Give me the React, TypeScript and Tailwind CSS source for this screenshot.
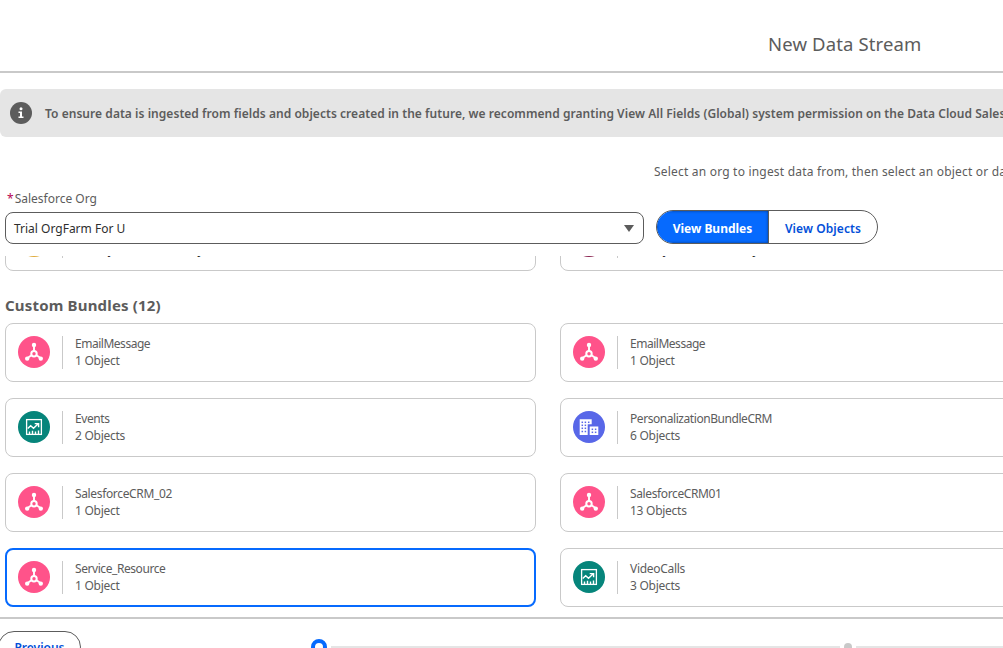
import React from "react";

type Kind = "network" | "metrics" | "account" | "gold" | "plum";

const colors: Record<Kind, string> = {
  network: "bg-[#ff538a]",
  metrics: "bg-[#06857b]",
  account: "bg-[#5867e8]",
  gold: "bg-[#dfab3c]",
  plum: "bg-[#8a2350]",
};

function Dots({ xs, ys }: { xs: number[]; ys: number[] }) {
  return (
    <g fill="#5867e8">
      {ys.map((y) => xs.map((x) => <rect key={`${x}-${y}`} x={x - 0.75} y={y - 0.75} width="1.5" height="1.5" />))}
    </g>
  );
}

function Glyph({ kind }: { kind: Kind }) {
  if (kind === "network")
    return (
      <svg viewBox="0 0 32 32" className="size-8" fill="none" stroke="#fff">
        <path d="M16 9v6M13.500 19.300 9.500 22M18.500 19.300 22.500 22" strokeWidth="1.900" />
        <circle cx="16" cy="17.700" r="2.700" strokeWidth="2" />
        <g fill="#fff" stroke="none">
          <circle cx="16" cy="8.900" r="2.200" />
          <circle cx="9.200" cy="22.600" r="2.200" />
          <circle cx="22.800" cy="22.600" r="2.200" />
        </g>
      </svg>
    );
  if (kind === "metrics")
    return (
      <svg viewBox="0 0 32 32" className="size-8" fill="none" stroke="#fff">
        <rect x="8.600" y="8.600" width="14.800" height="14.800" strokeWidth="1.300" />
        <path d="M9.700 17.600l3-2.900 2.800 2.500 4.700-4.500M16.700 12.600h3.900v3.700" strokeWidth="1.400" />
        <path d="M11.500 20.500v3M14.500 19.800v3.500M17.500 20.500v3M20.500 19.500v4" strokeWidth="1.400" />
      </svg>
    );
  if (kind === "account")
    return (
      <svg viewBox="0 0 32 32" className="size-8" fill="#fff">
        <path d="M6.700 8.300h12v5h-4V24h-8zM16.700 15.500h8.600V24h-8.600z" />
        <Dots xs={[9.3, 12.4]} ys={[11.3, 14.3, 17.3, 20.5]} />
        <Dots xs={[15.7]} ys={[11.3]} />
        <Dots xs={[19.4, 22.6]} ys={[18.3, 21.3]} />
      </svg>
    );
  return null;
}

interface CardProps {
  kind: Kind;
  name?: string;
  count: string;
  active?: boolean;
  tracking?: string;
  countClass?: string;
}

function Card({ kind, name, count, active, tracking = "", countClass = "tracking-[-0.270px]" }: CardProps) {
  return (
    <div
      className={`flex h-[59px] w-[531px] shrink-0 items-start rounded-lg ${
        active ? "border-2 border-[#066afe] pt-[11px] pl-[11px]" : "border border-[#c9c9c9] pt-3 pl-3"
      }`}
    >
      <div className={`size-8 shrink-0 rounded-full ${colors[kind]}`}>
        <Glyph kind={kind} />
      </div>
      <div className="ml-3 h-[33px] border-l border-[#c9c9c9]" />
      <div className="-mt-px ml-3 text-[12px] leading-[17px] whitespace-nowrap">
        <div className={`h-[17px] ${tracking}`}>{name}</div>
        <div className={countClass}>{count}</div>
      </div>
    </div>
  );
}

export default function App() {
  return (
    <div className="flex h-[648px] w-[1003px] flex-col overflow-hidden bg-white font-['Noto_Sans',sans-serif] text-[#5c5c5c]">
      <header className="flex h-[73px] shrink-0 items-center border-b-2 border-[#c9c9c9] pt-[17px] pl-[768px]">
        <h1 className="text-[18.500px] tracking-[0.140px] whitespace-nowrap">New Data Stream</h1>
      </header>
      <div className="mt-4 flex h-12 w-[1040px] shrink-0 items-center rounded-[6px] bg-[#e5e5e5] pl-2.5">
        <svg viewBox="0 0 22 22" className="size-[22px] shrink-0">
          <circle cx="11" cy="11" r="11" fill="#5c5c5c" />
          <circle cx="11" cy="6.800" r="1.500" fill="#fff" />
          <path d="M8.500 9.500H12v5h1.500V16h-5v-1.500H10V11H8.500z" fill="#fff" />
        </svg>
        <p className="mt-px ml-[13px] text-[12px] font-semibold tracking-[0.045px] whitespace-nowrap">
          To ensure data is ingested from fields and objects created in the future, we recommend granting View All Fields (Global) system permission on the Data Cloud Salesforce Connector
        </p>
      </div>
      <p className="mt-[26px] ml-[654px] h-[18px] text-[12px] leading-[18px] tracking-[0.200px] whitespace-nowrap">
        Select an org to ingest data from, then select an object or data bundle
      </p>
      <div className="mt-[9px] ml-[7px] h-[18px] text-[12px] leading-[18px]">
        <span className="mr-px text-[#b60554]">*</span>Salesforce Org
      </div>
      <div className="mt-[2px] flex h-[34px] shrink-0 items-center pl-[5px]">
        <div className="mt-[2px] flex h-8 w-[639px] items-center justify-between rounded-lg border border-[#5c5c5c] pr-[9px] pl-2">
          <span className="mt-[2px] text-[12px] text-[#2e2e2e]">Trial OrgFarm For U</span>
          <svg viewBox="0 0 10 7" className="mt-px h-[7px] w-[10px]">
            <path d="M0 0h10L5 7z" fill="#5c5c5c" />
          </svg>
        </div>
        <div className="ml-3 flex h-[34px] w-[222px] overflow-hidden rounded-full border border-[#5c5c5c] text-[12px] leading-[35px]">
          <button className="w-[112px] border-r border-[#5c5c5c] bg-[#066afe] font-bold text-white shadow-[inset_0_0_3px_#0007]">View Bundles</button>
          <button className="flex-1 font-semibold tracking-[0.100px] text-[#0250d9]">View Objects</button>
        </div>
      </div>
      <main className="mt-3 flex h-[361px] shrink-0 flex-col overflow-hidden pl-[5px]">
        <div className="-mt-[44px] flex shrink-0 gap-6">
          <Card kind="gold" count="13 Objects available by" countClass="text-[#2e2e2e]" />
          <Card kind="plum" count="13 Objects available by" countClass="text-[#2e2e2e]" />
        </div>
        <h2 className="mt-[22px] mb-[6px] h-6 shrink-0 text-[15px] leading-6 font-bold tracking-[0.180px]">Custom Bundles (12)</h2>
        <div className="grid grid-cols-[531px_531px] gap-x-6 gap-y-4">
          <Card kind="network" name="EmailMessage" count="1 Object" tracking="tracking-[-0.480px]" />
          <Card kind="network" name="EmailMessage" count="1 Object" tracking="tracking-[-0.480px]" />
          <Card kind="metrics" name="Events" count="2 Objects" tracking="tracking-[-0.400px]" />
          <Card kind="account" name="PersonalizationBundleCRM" count="6 Objects" tracking="tracking-[-0.440px]" />
          <Card kind="network" name="SalesforceCRM_02" count="1 Object" tracking="tracking-[-0.350px]" />
          <Card kind="network" name="SalesforceCRM01" count="13 Objects" tracking="tracking-[-0.380px]" />
          <Card kind="network" name="Service_Resource" count="1 Object" tracking="tracking-[-0.430px]" active />
          <Card kind="metrics" name="VideoCalls" count="3 Objects" tracking="tracking-[-0.300px]" />
        </div>
      </main>
      <footer className="flex h-16 shrink-0 items-start border-t-2 border-[#c9c9c9] pt-3">
        <button className="-ml-[2px] h-8 w-[83px] shrink-0 rounded-full border border-[#5c5c5c] text-[12px] leading-[32px] font-semibold text-[#0250d9]">Previous</button>
        <div className="mt-2 ml-[230px] flex h-4 shrink-0 items-center">
          <div className="size-4 rounded-full border-4 border-[#066afe]" />
          <div className="ml-1 h-[3px] w-[509px] bg-[#e5e5e5]" />
          <div className="mx-1 size-2 rounded-full bg-[#c9c9c9]" />
          <div className="h-[3px] w-[200px] bg-[#e5e5e5]" />
        </div>
      </footer>
    </div>
  );
}
